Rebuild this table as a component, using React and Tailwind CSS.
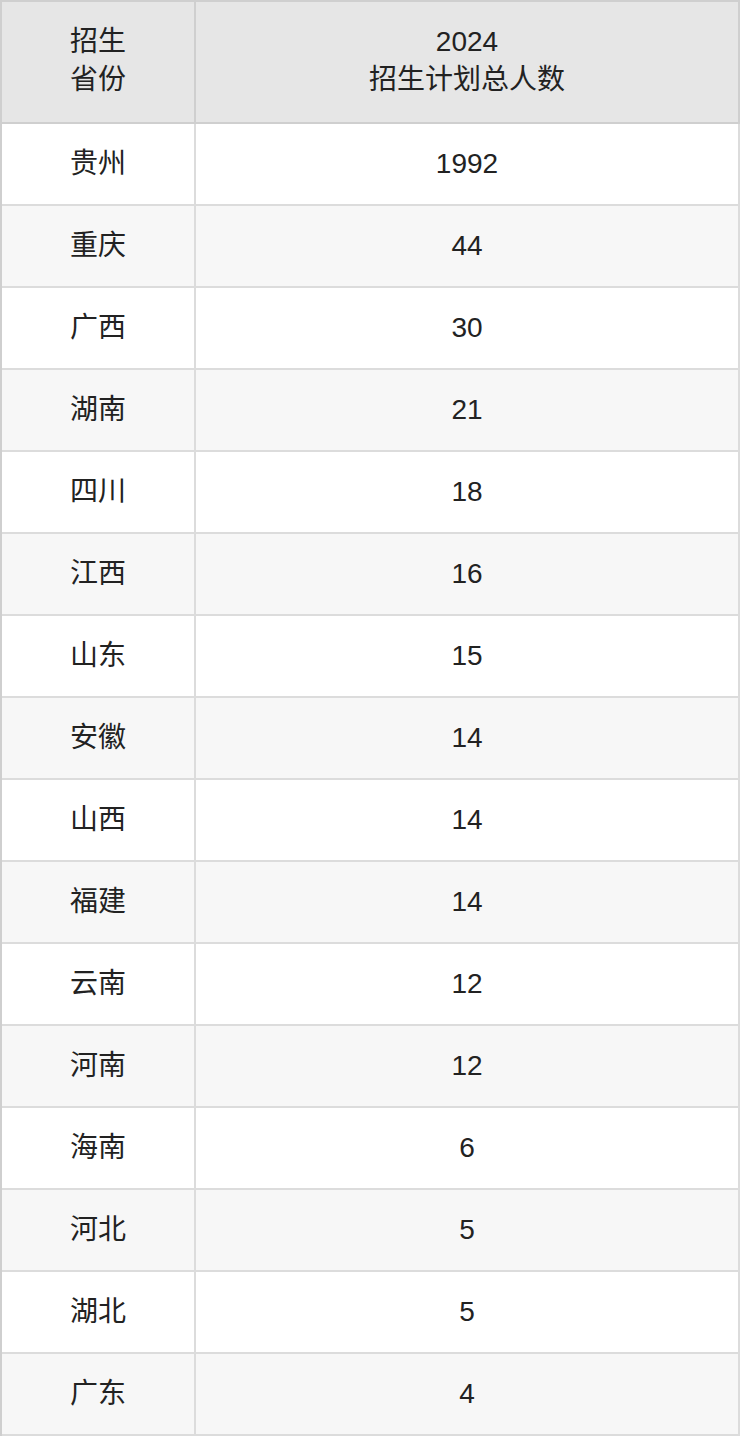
import React from 'react'

const rows = [
  ['贵州', '1992'],
  ['重庆', '44'],
  ['广西', '30'],
  ['湖南', '21'],
  ['四川', '18'],
  ['江西', '16'],
  ['山东', '15'],
  ['安徽', '14'],
  ['山西', '14'],
  ['福建', '14'],
  ['云南', '12'],
  ['河南', '12'],
  ['海南', '6'],
  ['河北', '5'],
  ['湖北', '5'],
  ['广东', '4'],
]

export default function App() {
  return (
    <div
      className="w-[740px] bg-white text-[#222] text-[28px] leading-[38px]"
      style={{ fontFamily: '"Liberation Sans", "Noto Sans CJK SC", sans-serif' }}
    >
      <div className="border-t-2 border-l-2 border-[#cfcfcf]">
        {/* Header */}
        <div className="flex h-[122px] bg-[#e6e6e6] border-b-2 border-[#cfcfcf]">
          <div className="w-[194px] shrink-0 border-r-2 border-[#cfcfcf] flex items-center justify-center text-center">
            <div className="-mt-[2px]">
              招生
              <br />
              省份
            </div>
          </div>
          <div className="flex-1 border-r-2 border-[#cfcfcf] flex items-center justify-center text-center">
            <div className="-mt-[2px]">
              2024
              <br />
              招生计划总人数
            </div>
          </div>
        </div>

        {/* Body */}
        {rows.map(([province, count], i) => (
          <div
            key={province + i}
            className={`flex h-[82px] border-b-2 border-[#dcdcdc] ${i % 2 === 1 ? 'bg-[#f7f7f7]' : 'bg-white'}`}
          >
            <div className="w-[194px] shrink-0 border-r-2 border-[#dcdcdc] flex items-center justify-center">
              {province}
            </div>
            <div className="flex-1 border-r-2 border-[#dcdcdc] flex items-center justify-center">
              {count}
            </div>
          </div>
        ))}
      </div>
    </div>
  )
}
